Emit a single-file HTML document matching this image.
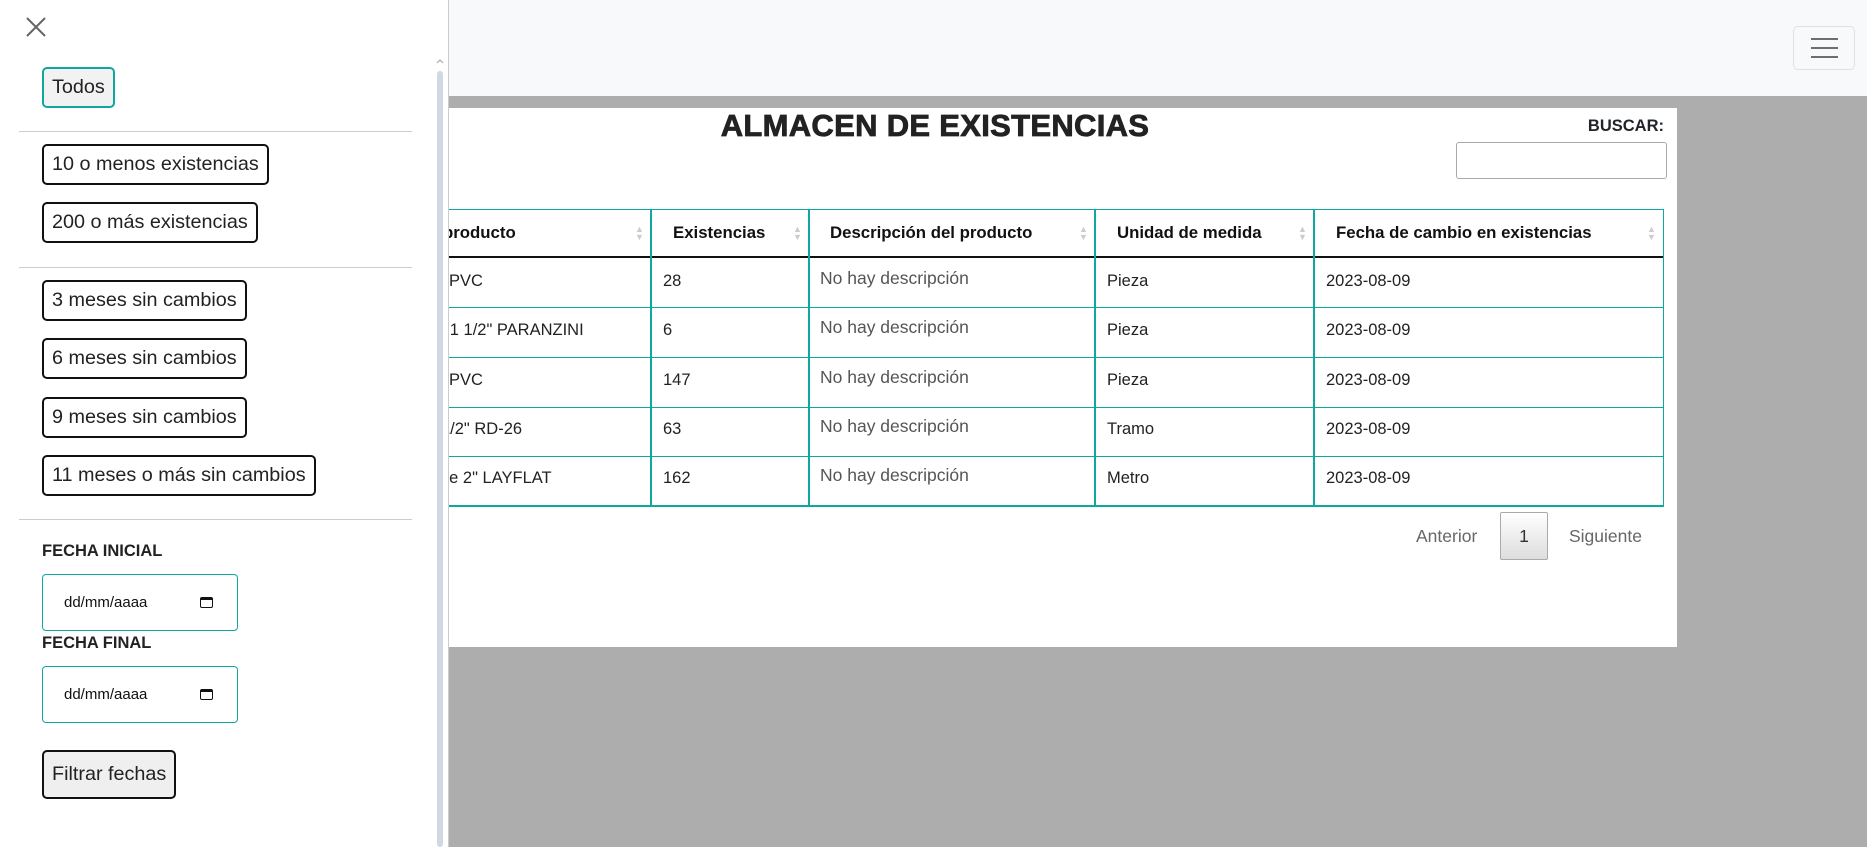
<!DOCTYPE html>
<html><head><meta charset="utf-8"><style>
*{box-sizing:border-box;margin:0;padding:0}
body{width:1867px;height:847px;overflow:hidden;background:#adadad;font-family:"Liberation Sans",Arial,sans-serif;position:relative;color:#212529}
.a{position:absolute}
.nav{left:0;top:0;width:1867px;height:96px;background:#f8f9fa}
.ham{left:1793px;top:26px;width:62px;height:44px;border:1px solid #dee2e6;border-radius:5px}
.ham i{position:absolute;left:17px;width:27px;height:2px;background:#6c6e70}
.card{left:200px;top:108px;width:1477px;height:539px;background:#fff}
.title{left:600px;top:108px;width:670px;text-align:center;font-weight:bold;font-size:31px;letter-spacing:0.3px;color:#222;-webkit-text-stroke:0.8px #222}
.bus{left:1560px;top:117px;width:104px;text-align:right;font-weight:bold;font-size:16.5px}
.inp{left:1456px;top:142px;width:211px;height:37px;border:1px solid #aaa;border-radius:3px}
.hl{background:#0ea89f}
.cell{position:absolute;font-size:16.5px;color:#222;white-space:nowrap}
.hd{font-weight:bold;font-size:16.8px;color:#111}
.desc{color:#555;font-size:17.5px}
.sort{position:absolute;width:8px;font-size:9px;color:#ccc;line-height:8px}
.side{left:0;top:0;width:449px;height:847px;background:#fff;border-right:1px solid #ccc}
.btn{position:absolute;left:42px;height:41px;border:2px solid #111;border-radius:5px;font-size:19.8px;padding:0 8px;line-height:37px;background:#fff;color:#222;white-space:nowrap}
.hr{position:absolute;left:19px;width:393px;height:1px;background:#ccc}
.lab{position:absolute;left:42px;font-weight:bold;font-size:16.5px;color:#222}
.date{position:absolute;left:42px;width:196px;height:57px;border:1px solid #0ea89f;border-radius:4px;font-size:15px;padding-left:21px;line-height:55px;color:#111}
.cal{position:absolute;left:157px;top:22px;width:13px;height:11px;border:1.5px solid #111;border-top-width:3px;border-radius:2px}
</style></head><body>
<div class="a nav"></div>
<div class="a ham"><i style="top:11px"></i><i style="top:20px"></i><i style="top:29px"></i></div>
<div class="a card"></div>
<div class="a title">ALMACEN DE EXISTENCIAS</div>
<div class="a bus">BUSCAR:</div>
<div class="a inp"></div>

<div class="a hl" style="left:400px;top:209px;width:1264px;height:1px"></div>
<div class="a" style="left:400px;top:256px;width:1264px;height:2px;background:#111"></div>
<div class="a hl" style="left:400px;top:307px;width:1264px;height:1px"></div>
<div class="a hl" style="left:400px;top:357px;width:1264px;height:1px"></div>
<div class="a hl" style="left:400px;top:407px;width:1264px;height:1px"></div>
<div class="a hl" style="left:400px;top:456px;width:1264px;height:1px"></div>
<div class="a hl" style="left:400px;top:505px;width:1264px;height:2px"></div>
<div class="a hl" style="left:650px;top:209px;width:2px;height:298px"></div>
<div class="a hl" style="left:808px;top:209px;width:2px;height:298px"></div>
<div class="a hl" style="left:1094px;top:209px;width:2px;height:298px"></div>
<div class="a hl" style="left:1313px;top:209px;width:2px;height:298px"></div>
<div class="a hl" style="left:1663px;top:209px;width:1px;height:298px"></div>

<div class="cell hd" style="left:443px;top:223px">producto</div>
<div class="cell hd" style="left:673px;top:223px">Existencias</div>
<div class="cell hd" style="left:830px;top:223px">Descripción del producto</div>
<div class="cell hd" style="left:1117px;top:223px">Unidad de medida</div>
<div class="cell hd" style="left:1336px;top:223px">Fecha de cambio en existencias</div>
<div class="sort" style="left:635px;top:225px">▲<br>▼</div>
<div class="sort" style="left:793px;top:225px">▲<br>▼</div>
<div class="sort" style="left:1079px;top:225px">▲<br>▼</div>
<div class="sort" style="left:1298px;top:225px">▲<br>▼</div>
<div class="sort" style="left:1647px;top:225px">▲<br>▼</div>

<div class="cell" style="left:449px;top:272px">PVC</div><div class="cell" style="left:663px;top:272px">28</div><div class="cell desc" style="left:820px;top:268px">No hay descripción</div><div class="cell" style="left:1107px;top:272px">Pieza</div><div class="cell" style="left:1326px;top:272px">2023-08-09</div>
<div class="cell" style="left:436px;top:321px">e 1 1/2" PARANZINI</div><div class="cell" style="left:663px;top:321px">6</div><div class="cell desc" style="left:820px;top:317px">No hay descripción</div><div class="cell" style="left:1107px;top:321px">Pieza</div><div class="cell" style="left:1326px;top:321px">2023-08-09</div>
<div class="cell" style="left:449px;top:371px">PVC</div><div class="cell" style="left:663px;top:371px">147</div><div class="cell desc" style="left:820px;top:367px">No hay descripción</div><div class="cell" style="left:1107px;top:371px">Pieza</div><div class="cell" style="left:1326px;top:371px">2023-08-09</div>
<div class="cell" style="left:441px;top:420px">1/2" RD-26</div><div class="cell" style="left:663px;top:420px">63</div><div class="cell desc" style="left:820px;top:416px">No hay descripción</div><div class="cell" style="left:1107px;top:420px">Tramo</div><div class="cell" style="left:1326px;top:420px">2023-08-09</div>
<div class="cell" style="left:440px;top:469px">de 2" LAYFLAT</div><div class="cell" style="left:663px;top:469px">162</div><div class="cell desc" style="left:820px;top:465px">No hay descripción</div><div class="cell" style="left:1107px;top:469px">Metro</div><div class="cell" style="left:1326px;top:469px">2023-08-09</div>

<div class="cell" style="left:1416px;top:526px;color:#666;font-size:17.5px">Anterior</div>
<div class="a" style="left:1500px;top:512px;width:48px;height:48px;border:1px solid #aaa;border-radius:2px;background:linear-gradient(#fff,#ddd);text-align:center;line-height:46px;font-size:17.5px;color:#333">1</div>
<div class="cell" style="left:1569px;top:526px;color:#666;font-size:17.5px">Siguiente</div>

<div class="a side"></div>
<svg class="a" style="left:25px;top:16px" width="22" height="22" viewBox="0 0 22 22"><path d="M2 2L20 20M20 2L2 20" stroke="#666" stroke-width="2"/></svg>
<svg class="a" style="left:435px;top:57px" width="10" height="8" viewBox="0 0 10 8"><path d="M2 6L5 3L8 6" stroke="#aaa" stroke-width="1.2" fill="none"/></svg>
<div class="a" style="left:437px;top:71px;width:6px;height:776px;background:#d0d9e1;border-radius:3px"></div>

<div class="btn" style="top:67px;border-color:#0ea89f;background:#f2f2f2">Todos</div>
<div class="hr" style="top:131px"></div>
<div class="btn" style="top:144px">10 o menos existencias</div>
<div class="btn" style="top:202px">200 o más existencias</div>
<div class="hr" style="top:267px"></div>
<div class="btn" style="top:280px">3 meses sin cambios</div>
<div class="btn" style="top:338px">6 meses sin cambios</div>
<div class="btn" style="top:397px">9 meses sin cambios</div>
<div class="btn" style="top:455px">11 meses o más sin cambios</div>
<div class="hr" style="top:519px"></div>
<div class="lab" style="top:542px">FECHA INICIAL</div>
<div class="date" style="top:574px">dd/mm/aaaa<span class="cal"></span></div>
<div class="lab" style="top:634px">FECHA FINAL</div>
<div class="date" style="top:666px">dd/mm/aaaa<span class="cal"></span></div>
<div class="btn" style="top:750px;height:49px;line-height:45px;background:#efefef">Filtrar fechas</div>
</body></html>
